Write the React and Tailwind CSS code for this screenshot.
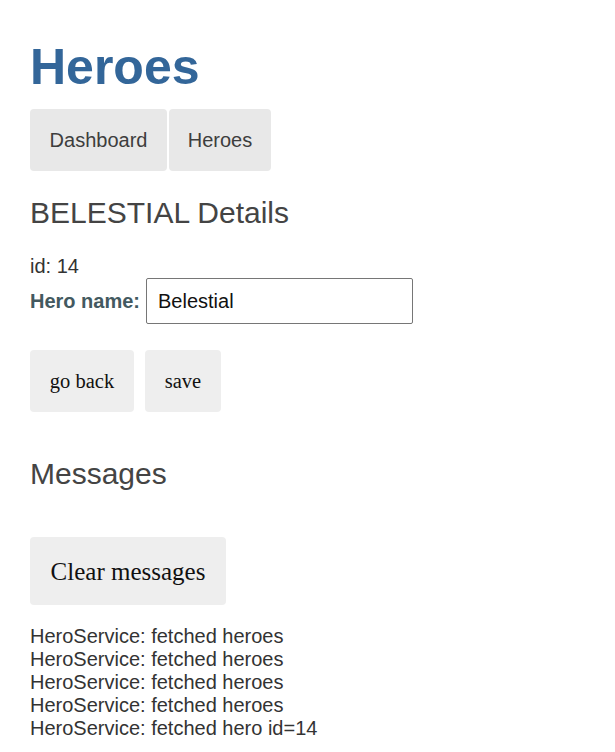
export default function App() {
  const sans = { fontFamily: '"Liberation Sans", Arial, sans-serif' };
  const serif = { fontFamily: '"Liberation Serif", "Times New Roman", serif' };
  const messages = [
    "HeroService: fetched heroes",
    "HeroService: fetched heroes",
    "HeroService: fetched heroes",
    "HeroService: fetched heroes",
    "HeroService: fetched hero id=14",
  ];
  return (
    <div className="min-h-[752px] bg-white px-[30px] pt-[39px] text-[#333]" style={sans}>
      <h1 className="text-[50px] leading-[57px] font-bold text-[#336699]">Heroes</h1>
      <nav className="mt-[13px] flex gap-[2px]">
        <a className="flex h-[62px] w-[137px] items-center justify-center rounded-[4px] bg-[#e8e8e8] text-[20px] leading-[23px] text-[#3d3d3d]">Dashboard</a>
        <a className="flex h-[62px] w-[102px] items-center justify-center rounded-[4px] bg-[#e8e8e8] text-[20px] leading-[23px] text-[#3d3d3d]">Heroes</a>
      </nav>
      <h2 className="mt-[25px] text-[30px] leading-[34px] text-[#444]">BELESTIAL Details</h2>
      <div className="mt-[25px] text-[20px] leading-[23px] text-[#333]">id: 14</div>
      <div className="flex h-[46px] items-center">
        <label className="text-[20px] leading-[23px] font-bold text-[#435960]">Hero name:</label>
        <input
          className="ml-[6px] h-[46px] w-[267px] rounded-[2px] border border-[#767676] px-[11px] text-[20px] leading-[23px] text-[#111] outline-none"
          style={sans}
          defaultValue="Belestial"
        />
      </div>
      <div className="mt-[26px] flex gap-[11px]">
        <button className="h-[62px] w-[104px] rounded-[4px] bg-[#eeeeee] text-[20.5px] leading-[23px] text-[#111]" style={serif}>go back</button>
        <button className="h-[62px] w-[76px] rounded-[4px] bg-[#eeeeee] text-[20.5px] leading-[23px] text-[#111]" style={serif}>save</button>
      </div>
      <h2 className="mt-[45px] text-[30px] leading-[34px] text-[#444]">Messages</h2>
      <button className="mt-[46px] h-[68px] w-[196px] rounded-[4px] bg-[#eeeeee] text-[25px] leading-[29px] text-[#111]" style={serif}>Clear messages</button>
      <div className="mt-[20px] text-[20px] leading-[23px] text-[#333]">
        {messages.map((m, i) => (
          <div key={i}>{m}</div>
        ))}
      </div>
    </div>
  );
}
